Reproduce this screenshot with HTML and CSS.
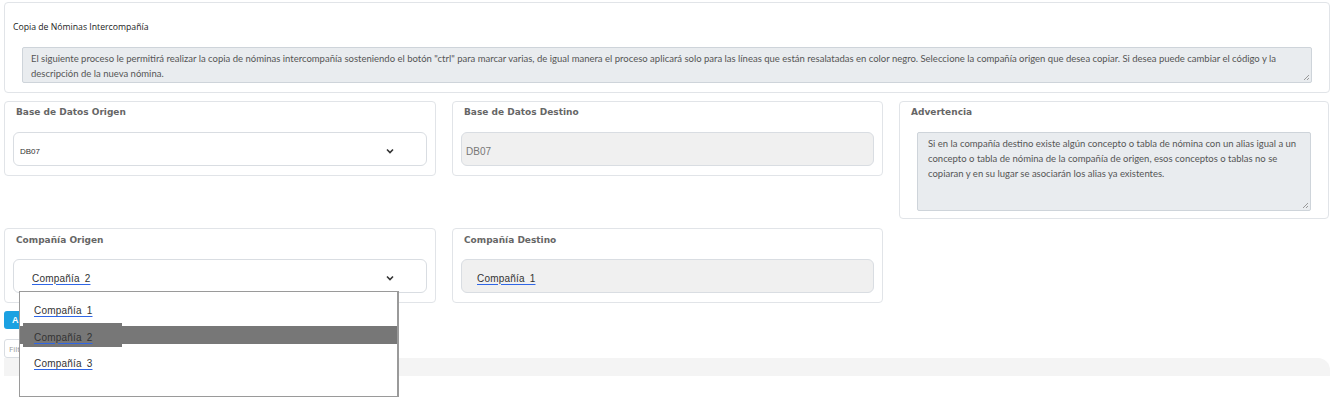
FILE: index.html
```html
<!DOCTYPE html>
<html lang="es">
<head>
    <meta charset="UTF-8">
    <title>Copia de Nóminas Intercompañía</title>
    <link rel="stylesheet" href="styles.css">
</head>
<body>
    <div class="page">
        <div class="card intro">
            <div class="intro-title">Copia de Nóminas Intercompañía</div>
            <div class="note note-wide">El siguiente proceso le permitirá realizar la copia de nóminas intercompañía sosteniendo el botón "ctrl" para marcar varias, de igual manera el proceso aplicará solo para las líneas que están resalatadas en color negro. Seleccione la compañía origen que desea copiar. Si desea puede cambiar el código y la descripción de la nueva nómina.<span class="grip"></span></div>
        </div>

        <div class="grid">
            <div class="card field">
                <div class="field-title">Base de Datos Origen</div>
                <div class="select">
                    <span class="db-value">DB07</span>
                    <svg class="chevron" width="8" height="6" viewBox="0 0 8 6"><path d="M1 1.5 L4 4.5 L7 1.5" fill="none" stroke="#333" stroke-width="1.6"/></svg>
                </div>
            </div>
            <div class="card field">
                <div class="field-title">Base de Datos Destino</div>
                <div class="select readonly">
                    <span class="db-plain">DB07</span>
                </div>
            </div>
            <div class="card field warn">
                <div class="field-title">Advertencia</div>
                <div class="note note-warn">Si en la compañía destino existe algún concepto o tabla de nómina con un alias igual a un concepto o tabla de nómina de la compañía de origen, esos conceptos o tablas no se copiaran y en su lugar se asociarán los alias ya existentes.<span class="grip"></span></div>
            </div>

            <div class="card field origin">
                <div class="field-title">Compañía Origen</div>
                <div class="select">
                    <span class="company">Compañía 2</span>
                    <svg class="chevron" width="8" height="6" viewBox="0 0 8 6"><path d="M1 1.5 L4 4.5 L7 1.5" fill="none" stroke="#333" stroke-width="1.6"/></svg>
                </div>
                <div class="dropdown">
                    <div class="option"><span class="company">Compañía 1</span></div>
                    <div class="option active"><span class="company">Compañía 2</span></div>
                    <div class="option"><span class="company">Compañía 3</span></div>
                </div>
            </div>
            <div class="card field">
                <div class="field-title">Compañía Destino</div>
                <div class="select readonly">
                    <span class="company">Compañía 1</span>
                </div>
            </div>
        </div>

        <div class="tools">
            <button class="btn-add">A</button>
            <div class="filter">Filtrar</div>
            <div class="table-head"></div>
        </div>
    </div>
</body>
</html>
```

FILE: styles.css
```css
body {
    margin: 0;
    min-height: 398px;
    font-family: "Open Sans", sans-serif;
    background-color: #ffffff;
    color: #333;
}

.page {
    padding: 2px 1px 0 4px;
}

.card {
    background-color: #fff;
    border: 1px solid #e1e4e8;
    border-radius: 4px;
    box-sizing: border-box;
}

.intro {
    height: 91px;
    padding: 17px 17px 0 8px;
}

.intro-title {
    font-size: 8.7px;
    color: #222;
    line-height: 14px;
}

.note {
    position: relative;
    background-color: #e9ecef;
    border: 1px solid #ced4da;
    border-radius: 2px;
    color: #555;
    font-family: Lato, "Open Sans", sans-serif;
    font-size: 9.5px;
    line-height: 15px;
    box-sizing: border-box;
}

.note-wide {
    margin: 13px 0 0 9px;
    height: 36px;
    padding: 3px 8px;
}

.grip {
    position: absolute;
    right: 2px;
    bottom: 2px;
    width: 5px;
    height: 5px;
    background: linear-gradient(135deg, transparent 45%, #999 45%, #999 55%, transparent 55%, transparent 75%, #999 75%, #999 85%, transparent 85%);
}

.grid {
    display: grid;
    grid-template-columns: 432px 431px 430px;
    column-gap: 16px;
    row-gap: 9px;
    margin-top: 8px;
    align-items: start;
}

.field {
    padding: 4px 8px 9px 8px;
}

.field-title {
    font-family: "DejaVu Sans", Verdana, sans-serif;
    font-weight: bold;
    font-size: 9px;
    color: #666;
    line-height: 12px;
    padding-left: 3px;
}

.grid .origin .field-title,
.grid .field:nth-child(5) .field-title {
    padding-top: 1px;
    margin-bottom: -1px;
}

.select {
    margin-top: 14px;
    height: 34px;
    border: 1px solid #d9dde2;
    border-radius: 6px;
    box-sizing: border-box;
    display: flex;
    align-items: center;
    padding: 4px 32px 0 6px;
    justify-content: space-between;
}

.readonly {
    background-color: #f0f0f0;
    justify-content: flex-start;
    padding-left: 4px;
}

.db-value {
    font-family: "Liberation Sans", Arial, sans-serif;
    font-size: 8px;
    color: #333;
}

.db-plain {
    font-family: "Liberation Sans", Arial, sans-serif;
    font-size: 10px;
    color: #777;
}

.chevron {
    display: block;
}

.warn {
    padding: 4px 17px 7px 8px;
}

.note-warn {
    margin: 14px 0 0 9px;
    height: 79px;
    padding: 3px 10px;
}

.company {
    font-family: "Liberation Sans", Arial, sans-serif;
    font-size: 10px;
    color: #333;
    text-decoration: underline;
    text-decoration-color: #2f66e6;
    text-underline-offset: 2px;
    word-spacing: 2px;
    letter-spacing: 0.2px;
}

.origin {
    position: relative;
}

.origin .select {
    padding-left: 18px;
}

.readonly .company {
    padding-left: 11px;
}

.dropdown {
    position: absolute;
    left: 14px;
    top: 62px;
    width: 380px;
    height: 106px;
    background-color: #fff;
    border: 1px solid #9a9a9a;
    border-right-width: 2px;
    box-sizing: border-box;
    padding-top: 7px;
    z-index: 2;
}

.option {
    position: relative;
    height: 18px;
    line-height: 18px;
    padding-left: 14px;
    margin-bottom: 8.5px;
}

.option .company {
    position: relative;
    z-index: 1;
}

.option.active {
    background-color: #777;
}

.option.active::before {
    content: "";
    position: absolute;
    left: 3px;
    top: -3px;
    width: 99px;
    height: 24px;
    background-color: #777;
}

.tools {
    margin-top: 8px;
}

.btn-add {
    display: block;
    width: 30px;
    height: 18px;
    border: none;
    border-radius: 3px;
    background-color: #1ba1e2;
    color: #fff;
    font-size: 9px;
    font-weight: bold;
    text-align: left;
    padding-left: 8px;
}

.filter {
    margin-top: 10px;
    width: 60px;
    height: 19px;
    border: 1px solid #d9dde2;
    border-radius: 3px;
    box-sizing: border-box;
    font-size: 8px;
    color: #999;
    line-height: 17px;
    padding-left: 4px;
}

.table-head {
    height: 18px;
    background-color: #f4f4f4;
    border-top-right-radius: 12px;
}
```
